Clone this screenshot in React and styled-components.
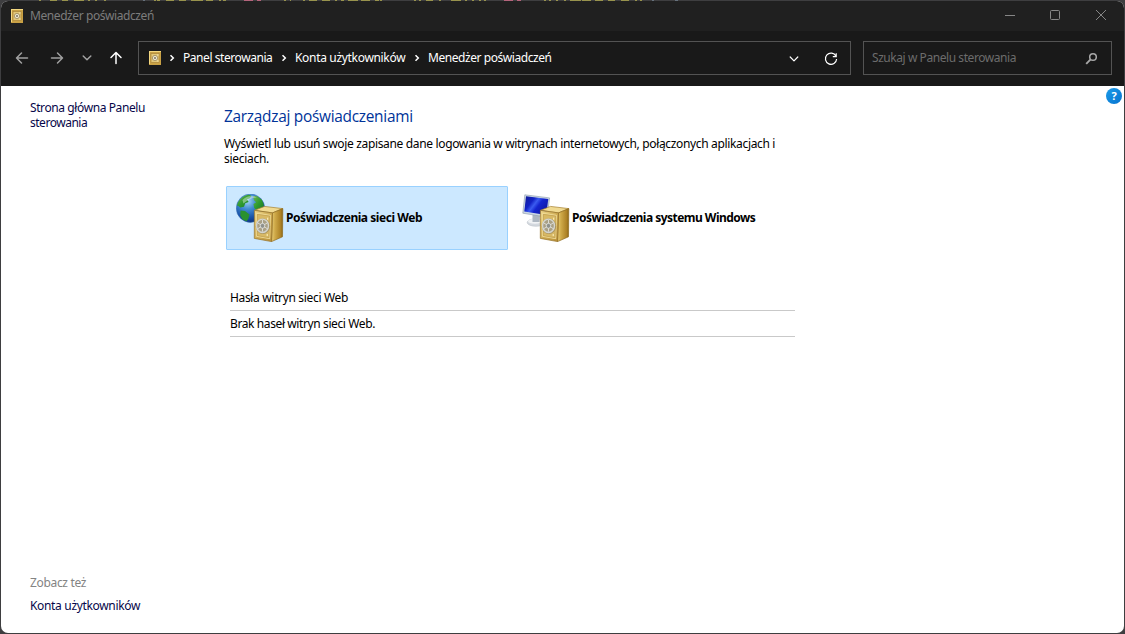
import React from "react";
import styled, { createGlobalStyle } from "styled-components";

const GlobalStyle = createGlobalStyle`
  * { box-sizing: border-box; }
  html, body { margin: 0; padding: 0; overflow: hidden; background: #3c3c3e; }
  body { font-family: "Noto Sans", "Open Sans", sans-serif; font-size: 12px; line-height: 15px; }
  svg { display: block; flex: none; }
`;

const Desktop = styled.div`
  position: relative;
  width: 1125px;
  height: 634px;
  padding: 1px;
  background: #3e3e40;
`;

const BackdropStrip = styled.svg`
  position: absolute;
  left: 0;
  top: 0;
`;

const Window = styled.div`
  position: relative;
  height: 632px;
  display: flex;
  flex-direction: column;
  border-radius: 7px;
  overflow: hidden;
  background: #fff;
`;

const Label = styled.span`
  white-space: nowrap;
  letter-spacing: ${(p) => p.$track || 0}px;
`;

const TitleBar = styled.header`
  height: 30px;
  flex: none;
  display: flex;
  align-items: center;
  gap: 7px;
  padding: 0 17px 0 10px;
  background: #202020;
  color: #7c7c7c;

  ${Label} { padding-bottom: 2px; }
`;

const WindowButtons = styled.div`
  margin-left: auto;
  display: flex;
  gap: 35px;
  padding-bottom: 1px;
  color: #868686;
`;

const Toolbar = styled.div`
  height: 55px;
  flex: none;
  display: flex;
  align-items: center;
  padding: 0 12px 1px 14px;
  background: #191919;

  ${Label} { padding-bottom: 2px; }
`;

const NavButtons = styled.nav`
  width: 123px;
  display: flex;
  align-items: center;
`;

const NavButton = styled.span`
  width: 14px;
  height: 14px;
  margin-right: ${(p) => p.$gap}px;
  color: ${(p) => (p.$active ? "#ffffff" : "#a0a0a0")};
`;

const AddressBar = styled.div`
  width: 713px;
  height: 34px;
  display: flex;
  align-items: center;
  padding: 0 12px 0 10px;
  border: 1px solid #535353;
  color: #fff;
`;

const Crumb = styled.div`
  display: flex;
  align-items: center;
  width: ${(p) => p.$width}px;

  svg { margin-right: 8px; }
`;

const AddressActions = styled.div`
  margin-left: auto;
  display: flex;
  align-items: center;
  gap: 25px;
  padding-top: 2px;
`;

const SearchBox = styled.div`
  width: 249px;
  height: 34px;
  margin-left: 12px;
  display: flex;
  align-items: center;
  justify-content: space-between;
  padding: 0 13px 0 8px;
  border: 1px solid #535353;
  color: #6c6c6c;
`;

const Body = styled.div`
  flex: 1;
  display: flex;
  position: relative;
`;

const Sidebar = styled.aside`
  width: 223px;
  padding: 14px 0 20px 29px;
  display: flex;
  flex-direction: column;
  justify-content: space-between;
`;

const LinkStack = styled.div`
  display: flex;
  flex-direction: column;
  gap: ${(p) => p.$gap || 0}px;
  color: #07074a;
`;

const Muted = styled(Label)`
  color: #838383;
`;

const Main = styled.main`
  width: 572px;
  padding-top: 20px;
`;

const Heading = styled.h1`
  margin: 0 0 8px;
  font-family: "Open Sans", "Noto Sans", sans-serif;
  font-size: 15.4px;
  font-weight: 400;
  line-height: 22px;
  color: #003399;
`;

const Intro = styled.p`
  margin: 0 0 20px;
  display: flex;
  flex-direction: column;
  color: #000;
`;

const Vaults = styled.div`
  display: flex;
  gap: 4px;
  padding-left: 2px;
`;

const Vault = styled.button`
  width: 282px;
  height: 64px;
  flex: none;
  display: flex;
  align-items: center;
  gap: 2px;
  padding: 0 9px;
  border: 1px solid ${(p) => (p.$selected ? "#99d1ff" : "transparent")};
  border-radius: 1px;
  background: ${(p) => (p.$selected ? "#cce8ff" : "transparent")};
  font: 700 12px/15px "Noto Sans", "Open Sans", sans-serif;
  color: #000;

  ${Label} { padding-bottom: 2px; }
`;

const List = styled.section`
  margin: 35px 0 0 6px;
  width: 565px;
`;

const ListRow = styled.div`
  height: 26px;
  padding-top: 5px;
  border-bottom: 1px solid #c9c9c9;
  color: #000;
`;

const HelpBadge = styled.div`
  position: absolute;
  top: 2px;
  right: 2px;
  width: 16px;
  height: 16px;
  border-radius: 50%;
  background: linear-gradient(135deg, #1c9be8, #0673cf);
  color: #fff;
  font-size: 11px;
  font-weight: 700;
  line-height: 16px;
  text-align: center;
`;

const YELLOW = [
  [39, 2], [50, 7], [62, 6], [74, 10], [88, 2], [95, 2], [104, 2], [154, 2], [157, 3],
  [166, 8], [179, 7], [191, 12], [206, 7], [219, 2], [223, 3], [284, 2], [290, 1],
  [303, 2], [309, 8], [322, 8], [335, 2], [341, 3], [348, 10], [361, 9], [375, 4],
  [380, 2], [414, 2], [419, 2], [426, 7], [439, 2], [451, 10], [465, 2], [472, 2],
  [479, 2], [484, 2], [544, 2], [549, 2], [556, 2], [564, 2], [570, 11], [582, 9],
  [595, 8], [608, 7], [621, 8], [635, 2], [640, 2],
];
const PINK = [[244, 9], [257, 4], [504, 9], [517, 4]];
const GREY = [[143, 2], [652, 2], [675, 3]];

const Strip = () => (
  <BackdropStrip width="1125" height="1">
    {YELLOW.map(([x, w]) => <rect key={x} x={x} width={w} height="1" fill="#98934d" />)}
    {PINK.map(([x, w]) => <rect key={x} x={x} width={w} height="1" fill="#b5647c" />)}
    {GREY.map(([x, w]) => <rect key={x} x={x} width={w} height="1" fill="#66717c" />)}
  </BackdropStrip>
);

const SafeSmall = () => (
  <svg width="12" height="14" viewBox="0 0 12 14">
    <rect width="12" height="14" rx=".5" fill="#c9a145" />
    <path d="M0 0H12V1H1V13H0Z" fill="#f3d780" />
    <rect x="2" y="2.5" width="8" height="9" fill="#e2c779" stroke="#a8843a" strokeWidth=".7" />
    <circle cx="6" cy="7" r="2.6" fill="#f1ead2" stroke="#8d7a50" strokeWidth=".7" />
    <circle cx="6" cy="7" r="1" fill="#77705c" />
    <path d="M9 3.5v1M9 9.5v1" stroke="#fff4cc" />
  </svg>
);

const Arrow = ({ turn = 0 }) => (
  <svg width="14" height="14" viewBox="0 0 14 14" fill="none" stroke="currentColor" strokeWidth="1.5" strokeLinecap="round" strokeLinejoin="round">
    <path transform={`rotate(${turn} 7 7)`} d="M12.5 7H1.5M6.5 2L1.5 7L6.5 12" />
  </svg>
);

const ChevronDown = ({ width = 10, stroke = 1.5 }) => (
  <svg width={width} height="14" viewBox={`0 0 ${width} 14`} fill="none" stroke="currentColor" strokeWidth={stroke} strokeLinecap="round" strokeLinejoin="round">
    <path d={`M1.2 5L${width / 2} ${3.8 + width / 2}L${width - 1.2} 5`} />
  </svg>
);

const ChevronRight = () => (
  <svg width="6" height="8" viewBox="0 0 6 8" fill="none" stroke="#fff" strokeWidth="1.5">
    <path d="M1.5 1.3L4.3 4L1.5 6.7" />
  </svg>
);

const Safe = ({ id }) => (
  <g>
    <linearGradient id={`${id}-front`} x1="0" y1="0" x2="1" y2="1">
      <stop offset="0" stopColor="#efd88c" /><stop offset=".5" stopColor="#cfac54" /><stop offset="1" stopColor="#b98f35" />
    </linearGradient>
    <linearGradient id={`${id}-side`} x1="0" y1="0" x2="1" y2="0">
      <stop offset="0" stopColor="#e8cd77" /><stop offset=".3" stopColor="#cfaa49" /><stop offset=".8" stopColor="#ad8226" /><stop offset="1" stopColor="#8c6514" />
    </linearGradient>
    <path d="M18.5 16.3L28.5 12.4L46.7 14.6L36.5 18.9Z" fill="#f0da92" stroke="#a5802f" strokeWidth=".7" strokeLinejoin="round" />
    <path d="M36.5 18.9L46.8 14.6L46.5 42.8L35.5 47.6Z" fill={`url(#${id}-side)`} stroke="#8e6a1d" strokeWidth=".7" strokeLinejoin="round" />
    <path d="M18.4 16.4L36.5 18.9L35.5 47.6L18.3 44.4Z" fill={`url(#${id}-front)`} stroke="#97732a" strokeWidth=".7" strokeLinejoin="round" />
    <path d="M20.6 19.4L34.4 21.3L33.7 44.7L20.5 42.3Z" fill="#d8b965" stroke="#f6e5a6" strokeWidth=".8" />
    <path d="M21.3 20.3L33.7 22L33 43.8L21.2 41.6Z" fill="none" stroke="#b59244" strokeWidth=".5" />
    <ellipse cx="26.9" cy="32.3" rx="7.2" ry="7.8" fill="#8c7f60" opacity=".6" />
    <ellipse cx="26.5" cy="31.8" rx="6" ry="6.7" fill="#a9a086" stroke="#d3d4cf" strokeWidth="1.4" />
    <path d="M26.5 26v11.6M21.5 28.8l10 6M21.5 34.8l10-6" stroke="#e2e2dd" strokeWidth=".9" />
    <ellipse cx="26.5" cy="31.8" rx="2.3" ry="2.5" fill="#8e918d" stroke="#e6e6e2" strokeWidth=".8" />
    <path d="M31.7 23.7v2.1M31.2 40v2" stroke="#fff3c3" strokeWidth="1" />
  </g>
);

const WebVaultIcon = () => (
  <svg width="48" height="48" viewBox="0 0 48 48">
    <radialGradient id="web-globe" cx=".4" cy=".25" r=".8">
      <stop offset="0" stopColor="#a6d6f5" /><stop offset=".35" stopColor="#438dd2" /><stop offset=".75" stopColor="#164fa6" /><stop offset="1" stopColor="#0c2d75" />
    </radialGradient>
    <linearGradient id="web-land" x1="0" y1="0" x2="1" y2="1">
      <stop offset="0" stopColor="#70b651" /><stop offset=".5" stopColor="#2f9b2f" /><stop offset="1" stopColor="#1b7427" />
    </linearGradient>
    <circle cx="14.5" cy="14.2" r="14.2" fill="url(#web-globe)" stroke="#366fb0" strokeWidth=".5" />
    <path d="M2 8.5C4.5 4 8.5 1.2 13 .8L15.7 2L13.5 4.5L11 5.2L12.7 8L9.2 9.2L8 12.7L4.2 13.5L2.6 12L.9 11.5Z" fill="url(#web-land)" />
    <path d="M4.5 16.5L9 17L13.5 20.5L12.3 25L10.5 27.3L6.5 25.5L4.3 21.5Z" fill="#2a9130" />
    <path d="M17 2.1L21.4 2.2L26 6L28 11L26 15L23 14.2L21.8 17L18.2 14L17.4 10L20.2 8.3L18 6.2Z" fill="url(#web-land)" />
    <path d="M6.5 6Q13-.3 21 3.5Q15 3.2 7.4 9.5Z" fill="#fff" opacity=".4" />
    <Safe id="web" />
  </svg>
);

const WindowsVaultIcon = () => (
  <svg width="48" height="48" viewBox="0 0 48 48">
    <linearGradient id="win-screen" x1="0" y1="0" x2="1" y2=".6">
      <stop offset="0" stopColor="#101a94" /><stop offset=".35" stopColor="#1222c5" /><stop offset=".5" stopColor="#3b5cf0" /><stop offset=".65" stopColor="#1425cf" /><stop offset="1" stopColor="#1018a4" />
    </linearGradient>
    <ellipse cx="14" cy="28.5" rx="8.8" ry="3.8" fill="#d4d9df" stroke="#b2b9c1" strokeWidth=".5" />
    <ellipse cx="13" cy="27.3" rx="7" ry="2.5" fill="#f1f3f5" />
    <path d="M10.5 20L18 21.2L17.5 28H10.5Z" fill="#aeb7c1" />
    <path d="M2.8 .8L27.6 3.9L25.2 23.2L.8 19.2Z" fill="#cbd7e3" stroke="#8c9bab" strokeWidth=".6" strokeLinejoin="round" />
    <path d="M4 2.3L26.3 5L24.2 21L2.3 17.6Z" fill="url(#win-screen)" />
    <Safe id="win" />
  </svg>
);

export default function App() {
  return (
    <>
      <GlobalStyle />
      <Desktop>
        <Strip />
        <Window>
          <TitleBar>
            <SafeSmall />
            <Label $track={-0.42}>Menedżer poświadczeń</Label>
            <WindowButtons>
              <svg width="11" height="11" viewBox="0 0 11 11"><path d="M1 5.5H11" stroke="currentColor" /></svg>
              <svg width="11" height="11" viewBox="0 0 11 11"><rect x=".5" y=".5" width="9" height="9" rx="1" fill="none" stroke="currentColor" /></svg>
              <svg width="11" height="11" viewBox="0 0 11 11"><path d="M0 0L10 10M10 0L0 10" stroke="currentColor" /></svg>
            </WindowButtons>
          </TitleBar>
          <Toolbar>
            <NavButtons>
              <NavButton $gap={21}><Arrow /></NavButton>
              <NavButton $gap={18}><Arrow turn={180} /></NavButton>
              <NavButton $gap={13}><ChevronDown /></NavButton>
              <NavButton $gap={0} $active><Arrow turn={90} /></NavButton>
            </NavButtons>
            <AddressBar>
              <Crumb $width={20}><SafeSmall /></Crumb>
              <Crumb $width={112}><ChevronRight /><Label $track={-0.44}>Panel sterowania</Label></Crumb>
              <Crumb $width={133}><ChevronRight /><Label $track={-0.32}>Konta użytkowników</Label></Crumb>
              <Crumb $width={140}><ChevronRight /><Label $track={-0.44}>Menedżer poświadczeń</Label></Crumb>
              <AddressActions>
                <ChevronDown stroke={1.2} />
                <svg width="14" height="14" viewBox="0 0 14 14" fill="none" stroke="#fff" strokeWidth="1.2">
                  <path d="M12 4.2A5.6 5.6 0 1 0 12.6 7M12.2 1.2V4.6H8.8" />
                </svg>
              </AddressActions>
            </AddressBar>
            <SearchBox>
              <Label $track={-0.437}>Szukaj w Panelu sterowania</Label>
              <svg width="13" height="13" viewBox="0 0 13 13" fill="none" stroke="#a8a8a8">
                <circle cx="8" cy="5" r="3.3" strokeWidth="1.5" />
                <path d="M5.6 7.4L1.2 11.8" strokeWidth="1.9" />
              </svg>
            </SearchBox>
          </Toolbar>
          <Body>
            <Sidebar>
              <LinkStack>
                <Label $track={-0.4}>Strona główna Panelu</Label>
                <Label $track={-0.48}>sterowania</Label>
              </LinkStack>
              <LinkStack $gap={8}>
                <Muted $track={-0.33}>Zobacz też</Muted>
                <Label $track={-0.33}>Konta użytkowników</Label>
              </LinkStack>
            </Sidebar>
            <Main>
              <Heading><Label $track={-0.27}>Zarządzaj poświadczeniami</Label></Heading>
              <Intro>
                <Label $track={-0.342}>Wyświetl lub usuń swoje zapisane dane logowania w witrynach internetowych, połączonych aplikacjach i</Label>
                <Label $track={-0.29}>sieciach.</Label>
              </Intro>
              <Vaults>
                <Vault $selected><WebVaultIcon /><Label $track={-0.45}>Poświadczenia sieci Web</Label></Vault>
                <Vault><WindowsVaultIcon /><Label $track={-0.53}>Poświadczenia systemu Windows</Label></Vault>
              </Vaults>
              <List>
                <ListRow><Label $track={-0.34}>Hasła witryn sieci Web</Label></ListRow>
                <ListRow><Label $track={-0.393}>Brak haseł witryn sieci Web.</Label></ListRow>
              </List>
            </Main>
            <HelpBadge>?</HelpBadge>
          </Body>
        </Window>
      </Desktop>
    </>
  );
}
